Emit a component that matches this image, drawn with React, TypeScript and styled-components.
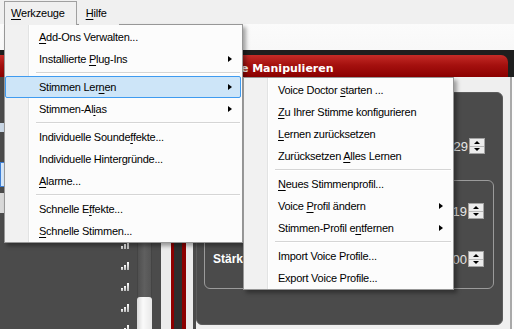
import React from "react";
import styled, { createGlobalStyle } from "styled-components";

const GlobalStyle = createGlobalStyle`
  html, body { margin: 0; padding: 0; overflow: hidden; background: #f0f0f0; }
  body { font-family: "Liberation Sans", Arial, sans-serif; }
`;

const Window = styled.div`
  position: relative;
  width: 514px;
  height: 329px;
  overflow: hidden;
  display: flex;
  flex-direction: column;
  background: #f0f0f0;
`;

const MenuBar = styled.div`
  height: 24px;
  flex: none;
  display: flex;
  align-items: flex-start;
  gap: 2px;
  padding-left: 4px;
  background: #f0f0f0;
  font-size: 11px;
  letter-spacing: -0.2px;
  color: #000;
`;

const BarItem = styled.div<{ $open?: boolean }>`
  position: relative;
  z-index: 5;
  margin-top: 1px;
  height: 24px;
  box-sizing: border-box;
  padding: 0 11px 1px 6px;
  display: flex;
  align-items: center;
  border: 1px solid ${(p) => (p.$open ? "#a0a0a0" : "transparent")};
  border-bottom: none;
  background: #f0f0f0;
`;

const Toolbar = styled.div`
  height: 26px;
  flex: none;
  background: linear-gradient(#fbfbfb, #f8f8f8);
`;

const HeaderRow = styled.div`
  height: 27px;
  flex: none;
  box-sizing: border-box;
  padding: 5px 6px 0 0;
  background: #1e1e1e;
  display: flex;
`;

const RedBar = styled.div`
  flex: 1;
  box-sizing: border-box;
  padding: 4px 0 0 201px;
  display: flex;
  align-items: center;
  border-radius: 0 7px 0 0;
  background: linear-gradient(#c42b27 0%, #a5110f 45%, #8b0000 100%);
  color: #fff;
  font-family: "DejaVu Sans", Verdana, sans-serif;
  font-weight: bold;
  font-size: 11px;
`;

const Content = styled.div`
  flex: 1;
  display: flex;
  min-height: 0;
`;

const LeftPane = styled.div`
  width: 196px;
  flex: none;
  box-sizing: border-box;
  padding-right: 3px;
  background: #4b4b4b;
  display: flex;
`;

const ListColumn = styled.div`
  width: 110px;
  flex: none;
  display: flex;
  flex-direction: column;
`;

const ListStrip = styled.div`
  margin-top: 46px;
  height: 9px;
  background: #c9d6e4;
`;

const ListSelected = styled.div`
  margin-top: 30px;
  height: 25px;
  box-sizing: border-box;
  border: 1px solid #3d7fd6;
  background: #d5e6f7;
`;

const ListGray = styled.div`
  margin-top: 6px;
  height: 20px;
  background: #d8d8d8;
`;

const IconColumn = styled.div`
  margin-left: 11px;
  width: 9px;
  flex: none;
  display: flex;
  flex-direction: column;
  padding-top: 17px;
  gap: 13px;
  overflow: hidden;
`;

const SignalSvg = styled.svg`
  display: block;
  flex: none;
`;

const SliderTrack = styled.div`
  margin-left: 7px;
  width: 15px;
  flex: none;
  box-sizing: border-box;
  display: flex;
  flex-direction: column;
  justify-content: flex-end;
  background: linear-gradient(to right, #505050, #5f5f5f 50%, #555555);
  border-left: 1px solid #444;
  border-right: 1px solid #444;
`;

const SliderThumb = styled.div`
  height: 32px;
  margin: 0 -1px;
  border-radius: 3px 3px 0 0;
  background: linear-gradient(to right, #d9d9d9, #fafafa 40%, #e8e8e8);
`;

const Meter = styled.div`
  margin-left: 9px;
  width: 32px;
  flex: none;
  box-sizing: border-box;
  padding: 0 7px 0 10px;
  display: flex;
  background: #ececec;
`;

const MeterCore = styled.div`
  flex: 1;
  border-left: 3px solid #8c0000;
  border-right: 4px solid #8c0000;
  background: #2e2e2e;
`;

const RightArea = styled.div`
  flex: 1;
  box-sizing: border-box;
  padding: 15px 7px 4px 0;
  display: flex;
  background: #efefef;
`;

const FrameEdge = styled.div`
  width: 4px;
  flex: none;
  box-sizing: border-box;
  border-left: 2px solid #a9a9a9;
  background: #fdfdfd;
`;

const Panel = styled.div`
  flex: 1;
  box-sizing: border-box;
  border: 1px solid #5c5c5c;
  border-radius: 6px;
  background: #4b4b4b;
  padding: 45px 8px 0 7px;
  display: flex;
  flex-direction: column;
`;

const SpinRow = styled.div<{ $pr: number; $mt?: number }>`
  height: 16px;
  flex: none;
  margin-top: ${(p) => p.$mt ?? 0}px;
  padding-right: ${(p) => p.$pr}px;
  display: flex;
  align-items: center;
  justify-content: space-between;
`;

const FieldLabel = styled.span`
  color: #fff;
  font-weight: bold;
  font-size: 12px;
`;

const SpinField = styled.div`
  display: flex;
  align-items: center;
  gap: 1px;
  margin-left: auto;
`;

const NumberText = styled.span`
  color: #e6e6e6;
  font-size: 13px;
`;

const Spinner = styled.div`
  width: 16px;
  height: 16px;
  box-sizing: border-box;
  border: 1px solid #a3a3a3;
  background: #ececec;
  display: flex;
  flex-direction: column;
`;

const SpinHalf = styled.div<{ $top?: boolean }>`
  flex: 1;
  display: flex;
  align-items: center;
  justify-content: center;
  border-bottom: ${(p) => (p.$top ? "1px solid #b8b8b8" : "none")};
`;

const SpinArrow = styled.span<{ $up?: boolean }>`
  width: 0;
  height: 0;
  border-left: 3px solid transparent;
  border-right: 3px solid transparent;
  ${(p) => (p.$up ? "border-bottom: 3px solid #000;" : "border-top: 3px solid #000;")}
`;

const GroupBox = styled.div`
  margin-top: 26px;
  height: 109px;
  flex: none;
  box-sizing: border-box;
  border: 1px solid #9b9b9b;
  border-radius: 6px;
  padding: 22px 9px 0 8px;
  display: flex;
  flex-direction: column;
`;

/* ---------- menus ---------- */

const MenuPanel = styled.div`
  position: absolute;
  box-sizing: border-box;
  border: 1px solid #979797;
  padding-top: 1px;
  background: linear-gradient(
    to right,
    #f1f1f1 0,
    #f1f1f1 23px,
    #e2e3e3 23px,
    #e2e3e3 24px,
    #ffffff 24px,
    #ffffff 25px,
    #fcfcfc 25px
  );
  box-shadow: 3px 3px 4px rgba(0, 0, 0, 0.35);
  font-size: 11px;
  letter-spacing: -0.25px;
  color: #000;
`;

const MainMenu = styled(MenuPanel)`
  left: 4px;
  top: 24px;
  width: 239px;
  z-index: 4;
`;

const SubMenu = styled(MenuPanel)`
  left: 243px;
  top: 77px;
  width: 211px;
  z-index: 6;
`;

const Item = styled.div<{ $active?: boolean }>`
  height: 22px;
  box-sizing: border-box;
  margin-right: 1px;
  padding: 0 8px 0 33px;
  display: flex;
  align-items: center;
  justify-content: space-between;
  white-space: nowrap;
  border: 1px solid ${(p) => (p.$active ? "#3f9bf0" : "transparent")};
  border-radius: 2px;
  background: ${(p) => (p.$active ? "#cde5f8" : "transparent")};
`;

const Sep = styled.div`
  height: 1px;
  margin: 2px 2px 2px 31px;
  background: #d5d5d5;
  border-bottom: 1px solid #ffffff;
`;

const Arrow = styled.span`
  width: 0;
  height: 0;
  border-top: 3.5px solid transparent;
  border-bottom: 3.5px solid transparent;
  border-left: 4px solid #000;
`;

const Key = styled.span`
  text-decoration: underline;
  text-underline-offset: 2px;
`;

type Entry =
  | { sep: true }
  | { text: string; key?: number; sub?: boolean; active?: boolean };

function Label({ text, k }: { text: string; k?: number }) {
  if (k === undefined) return <span>{text}</span>;
  return (
    <span>
      {text.slice(0, k)}
      <Key>{text[k]}</Key>
      {text.slice(k + 1)}
    </span>
  );
}

const mainEntries: Entry[] = [
  { text: "Add-Ons Verwalten...", key: 0 },
  { text: "Installierte Plug-Ins", key: 13, sub: true },
  { sep: true },
  { text: "Stimmen Lernen", key: 11, sub: true, active: true },
  { text: "Stimmen-Alias", key: 10, sub: true },
  { sep: true },
  { text: "Individuelle Soundeffekte...", key: 19 },
  { text: "Individuelle Hintergründe..." },
  { text: "Alarme...", key: 0 },
  { sep: true },
  { text: "Schnelle Effekte...", key: 10 },
  { text: "Schnelle Stimmen...", key: 0 },
];

const subEntries: Entry[] = [
  { text: "Voice Doctor starten ...", key: 13 },
  { text: "Zu Ihrer Stimme konfigurieren", key: 0 },
  { text: "Lernen zurücksetzen", key: 0 },
  { text: "Zurücksetzen Alles Lernen", key: 13 },
  { sep: true },
  { text: "Neues Stimmenprofil...", key: 0 },
  { text: "Voice Profil ändern", key: 6, sub: true },
  { text: "Stimmen-Profil entfernen", key: 16, sub: true },
  { sep: true },
  { text: "Import Voice Profile..." },
  { text: "Export Voice Profile..." },
];

function Entries({ list }: { list: Entry[] }) {
  return (
    <>
      {list.map((e, i) =>
        "sep" in e ? (
          <Sep key={i} />
        ) : (
          <Item key={i} $active={e.active}>
            <Label text={e.text} k={e.key} />
            {e.sub && <Arrow />}
          </Item>
        )
      )}
    </>
  );
}

function SignalIcon() {
  return (
    <SignalSvg width="9" height="8" viewBox="0 0 9 8">
      <defs>
        <linearGradient id="sg" x1="0" y1="0" x2="0" y2="1">
          <stop offset="0" stopColor="#ffffff" />
          <stop offset="1" stopColor="#b8b8b8" />
        </linearGradient>
      </defs>
      <rect x="0" y="5" width="2" height="3" fill="url(#sg)" />
      <rect x="3" y="3" width="2" height="5" fill="url(#sg)" />
      <rect x="6" y="0" width="2" height="8" fill="url(#sg)" />
    </SignalSvg>
  );
}

function SpinBox({ value }: { value: string }) {
  return (
    <SpinField>
      <NumberText>{value}</NumberText>
      <Spinner>
        <SpinHalf $top>
          <SpinArrow $up />
        </SpinHalf>
        <SpinHalf>
          <SpinArrow />
        </SpinHalf>
      </Spinner>
    </SpinField>
  );
}

export default function App() {
  const icons = Array.from({ length: 12 }, (_, i) => i);
  return (
    <>
      <GlobalStyle />
      <Window>
        <MenuBar>
          <BarItem $open>
            <Label text="Werkzeuge" k={0} />
          </BarItem>
          <BarItem>
            <Label text="Hilfe" k={0} />
          </BarItem>
        </MenuBar>
        <Toolbar />
        <HeaderRow>
          <RedBar>Stimme Manipulieren</RedBar>
        </HeaderRow>
        <Content>
          <LeftPane>
            <ListColumn>
              <ListStrip />
              <ListSelected />
              <ListGray />
            </ListColumn>
            <IconColumn>
              {icons.map((i) => (
                <SignalIcon key={i} />
              ))}
            </IconColumn>
            <SliderTrack>
              <SliderThumb />
            </SliderTrack>
            <Meter>
              <MeterCore />
            </Meter>
          </LeftPane>
          <RightArea>
            <Panel>
              <SpinRow $pr={9}>
                <SpinBox value="29" />
              </SpinRow>
              <GroupBox>
                <SpinRow $pr={0}>
                  <SpinBox value="19" />
                </SpinRow>
                <SpinRow $pr={0} $mt={32}>
                  <FieldLabel>Stärke:</FieldLabel>
                  <SpinBox value="00" />
                </SpinRow>
              </GroupBox>
            </Panel>
          </RightArea>
          <FrameEdge />
        </Content>

        <MainMenu>
          <Entries list={mainEntries} />
        </MainMenu>
        <SubMenu>
          <Entries list={subEntries} />
        </SubMenu>
      </Window>
    </>
  );
}
